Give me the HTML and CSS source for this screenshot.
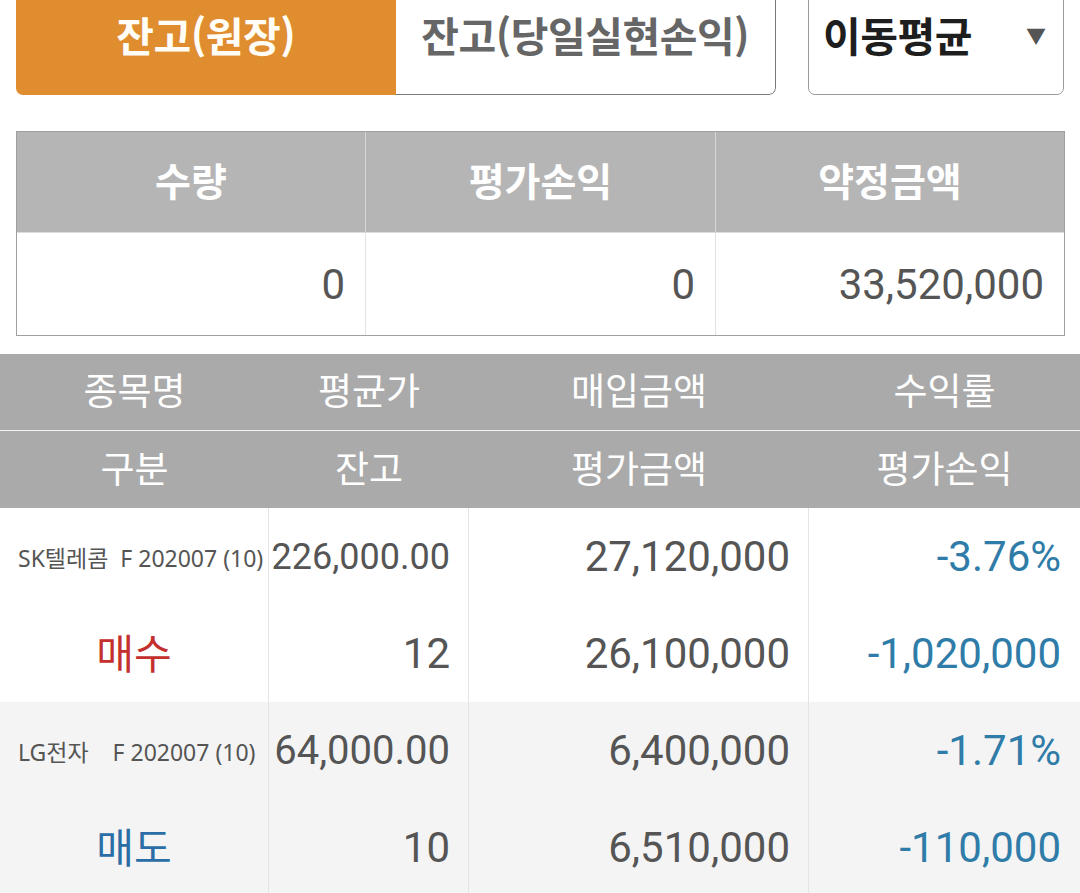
FILE: index.html
```html
<!DOCTYPE html>
<html lang="ko">
<head>
<meta charset="utf-8">
<link rel="stylesheet" href="styles.css">
</head>
<body>
<div class="top">
  <div class="tabs">
    <div class="tab active">잔고(원장)</div>
    <div class="tab">잔고(당일실현손익)</div>
  </div>
  <div class="select">
    <span class="select-label">이동평균</span>
    <span class="select-arrow">▼</span>
  </div>
</div>

<div class="summary">
  <div class="sum-head">수량</div>
  <div class="sum-head">평가손익</div>
  <div class="sum-head last">약정금액</div>
  <div class="sum-val">0</div>
  <div class="sum-val">0</div>
  <div class="sum-val last">33,520,000</div>
</div>

<div class="detail">
  <div class="dhead">
    <div>종목명</div><div>평균가</div><div>매입금액</div><div>수익률</div>
  </div>
  <div class="dhead second">
    <div>구분</div><div>잔고</div><div>평가금액</div><div>평가손익</div>
  </div>
  <div class="group">
    <div class="cell name">SK텔레콤&nbsp; F 202007 (10)</div>
    <div class="cell num fit-sm">226,000.00</div>
    <div class="cell num">27,120,000</div>
    <div class="cell num blue last">-3.76%</div>
    <div class="cell side buy">매수</div>
    <div class="cell num">12</div>
    <div class="cell num">26,100,000</div>
    <div class="cell num blue last">-1,020,000</div>
  </div>
  <div class="group alt">
    <div class="cell name">LG전자&nbsp;&nbsp;&nbsp; F 202007 (10)</div>
    <div class="cell num fit-md">64,000.00</div>
    <div class="cell num">6,400,000</div>
    <div class="cell num blue last">-1.71%</div>
    <div class="cell side sell">매도</div>
    <div class="cell num">10</div>
    <div class="cell num">6,510,000</div>
    <div class="cell num blue last">-110,000</div>
  </div>
</div>
</body>
</html>
```

FILE: styles.css
```css
html, body {
  margin: 0;
  padding: 0;
  background: #ffffff;
}
body {
  width: 1080px;
  height: 893px;
  overflow: hidden;
  font-family: Roboto, "Noto Sans CJK KR", sans-serif;
  color: #555;
}

.top {
  display: flex;
  align-items: stretch;
  margin-top: -12px;
  padding: 0 16px;
  height: 107px;
  gap: 32px;
}
.tabs {
  display: flex;
  width: 760px;
  border-radius: 0 0 7px 7px;
  overflow: hidden;
}
.tab {
  flex: 1;
  display: flex;
  align-items: center;
  justify-content: center;
  padding-bottom: 16px;
  box-sizing: border-box;
  font-family: "Noto Sans CJK KR", sans-serif;
  font-weight: 700;
  font-size: 41px;
  color: #666;
  border: 1px solid #7a7a7a;
  border-left: none;
  border-radius: 0 0 7px 0;
  letter-spacing: -0.5px;
}
.tab.active {
  background: #df8d2f;
  color: #fffdf6;
  border: none;
  border-radius: 0;
}
.select {
  flex: 1;
  display: flex;
  align-items: center;
  justify-content: space-between;
  padding: 0 17px 16px 14px;
  border: 1px solid #9a9a9a;
  border-radius: 0 0 7px 7px;
}
.select-label {
  font-family: "Noto Sans CJK KR", sans-serif;
  font-weight: 700;
  font-size: 41px;
  color: #1e1e1e;
  letter-spacing: -0.5px;
}
.select-arrow {
  font-size: 20px;
  color: #555;
  padding-top: 4px;
}

.summary {
  margin: 36px 15px 0 16px;
  display: grid;
  grid-template-columns: 349px 350px 1fr;
  border: 1px solid #a0a0a0;
}
.sum-head {
  height: 101px;
  box-sizing: border-box;
  padding-bottom: 6px;
  background: #b5b5b5;
  color: #fff;
  font-family: "Noto Sans CJK KR", sans-serif;
  font-weight: 700;
  font-size: 39px;
  display: flex;
  align-items: center;
  justify-content: center;
  border-right: 1px solid #d6d6d6;
  border-bottom: 1px solid #dcdcdc;
}
.sum-val {
  height: 102px;
  display: flex;
  align-items: center;
  justify-content: flex-end;
  padding-right: 20px;
  font-size: 42px;
  color: #555;
  border-right: 1px solid #e2e2e2;
}
.sum-head.last, .sum-val.last { border-right: none; }

.detail {
  margin-top: 18px;
}
.dhead {
  display: grid;
  grid-template-columns: 269px 200px 340px 271px;
  height: 76px;
  background: #aaaaaa;
  color: #fff;
  font-family: "Noto Sans CJK KR", sans-serif;
  font-size: 37px;
  border-bottom: 1px solid #f2f2f2;
}
.dhead.second {
  height: 77px;
  border-bottom: none;
}
.dhead div {
  display: flex;
  align-items: center;
  justify-content: center;
  padding-bottom: 6px;
}

.group {
  display: grid;
  grid-template-columns: 269px 200px 340px 271px;
  grid-auto-rows: 97px;
  background: #fff;
}
.group.alt {
  background: #f4f4f4;
}
.cell {
  display: flex;
  align-items: center;
  border-right: 1px solid #e4e4e4;
  box-sizing: border-box;
}
.cell.last { border-right: none; }
.num {
  justify-content: flex-end;
  padding-right: 18px;
  font-size: 42px;
  color: #555;
}
.num.fit-sm { font-size: 36px; }
.num.fit-md { font-size: 40px; }
.blue { color: #2f7ca8; padding-right: 19px; }
.name {
  justify-content: flex-start;
  padding-left: 18px;
  font-family: "Noto Sans", "Noto Sans CJK KR", sans-serif;
  font-size: 23px;
  color: #555;
  white-space: nowrap;
}
.side {
  justify-content: center;
  padding-bottom: 5px;
  font-family: "Noto Sans CJK KR", sans-serif;
  font-size: 41px;
}
.buy { color: #c4302e; }
.sell { color: #2b6ea6; }
```
